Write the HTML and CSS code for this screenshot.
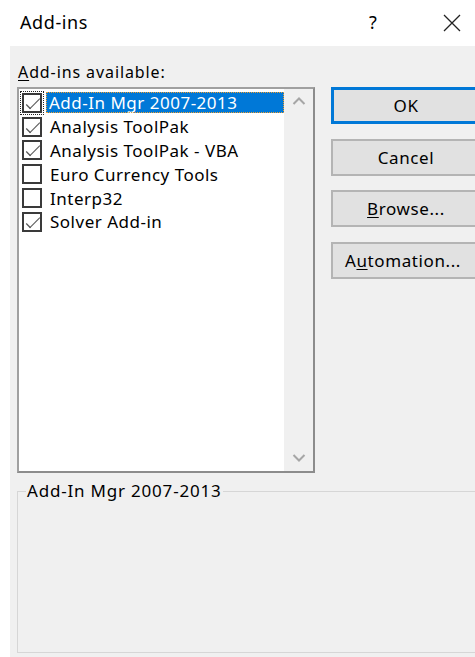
FILE: index.html
```html
<!DOCTYPE html>
<html lang="en">
<head>
<meta charset="utf-8">
<title>Add-ins</title>
<link rel="stylesheet" href="styles.css">
</head>
<body>
<div class="titlebar">
  <span class="title">Add-ins</span>
  <span class="help">?</span>
  <span class="close">
    <svg width="18" height="18" viewBox="0 0 18 18"><path d="M1 1 L17 17 M17 1 L1 17" stroke="#222" stroke-width="1.3" fill="none"/></svg>
  </span>
</div>
<div class="dialog">
  <div class="label"><u>A</u>dd-ins available:</div>
  <div class="main">
    <div class="listbox">
      <ul class="items">
        <li class="item selected"><span class="check on focus"></span><span class="name">Add-In Mgr 2007-2013</span></li>
        <li class="item"><span class="check on"></span><span class="name">Analysis ToolPak</span></li>
        <li class="item"><span class="check on"></span><span class="name">Analysis ToolPak - VBA</span></li>
        <li class="item"><span class="check"></span><span class="name">Euro Currency Tools</span></li>
        <li class="item"><span class="check"></span><span class="name">Interp32</span></li>
        <li class="item"><span class="check on"></span><span class="name">Solver Add-in</span></li>
      </ul>
      <div class="scrollbar">
        <svg width="14" height="10" viewBox="0 0 14 10"><path d="M1.5 8 L7 2.5 L12.5 8" stroke="#a6a6a6" stroke-width="2" fill="none"/></svg>
        <svg width="14" height="10" viewBox="0 0 14 10"><path d="M1.5 2 L7 7.5 L12.5 2" stroke="#a6a6a6" stroke-width="2" fill="none"/></svg>
      </div>
    </div>
    <div class="buttons">
      <button class="btn default">OK</button>
      <button class="btn">Cancel</button>
      <button class="btn"><u>B</u>rowse...</button>
      <button class="btn wide">A<u>u</u>tomation...</button>
    </div>
  </div>
  <div class="group">
    <span class="caption">Add-In Mgr 2007-2013</span>
  </div>
</div>
</body>
</html>
```
FILE: styles.css
```css
html, body {
  margin: 0;
  padding: 0;
  width: 475px;
  height: 657px;
  overflow: hidden;
  background: #ffffff;
  font-family: "Noto Sans", "Open Sans", sans-serif;
  color: #000;
}

.titlebar {
  height: 46px;
  display: flex;
  align-items: center;
  position: relative;
}

.title {
  margin-left: 20px;
  font-size: 18px;
  letter-spacing: 0.6px;
  margin-top: -2px;
}

.help {
  position: absolute;
  left: 369px;
  top: 10px;
  font-size: 18px;
}

.close {
  position: absolute;
  left: 443px;
  top: 14px;
  display: flex;
}

.dialog {
  margin-left: 10px;
  width: 480px;
  height: 611px;
  background: #f0f0f0;
  padding: 16px 0 0 7px;
  box-sizing: border-box;
}

.label {
  font-size: 16px;
  letter-spacing: 0.9px;
  line-height: 20px;
  margin-left: 1px;
}

.label u {
  text-underline-offset: 2px;
}

.main {
  display: flex;
  gap: 16px;
  margin-top: 5px;
}

.listbox {
  width: 298px;
  height: 386px;
  box-sizing: border-box;
  border: 2px solid #a0a0a0;
  border-right-color: #8c8c8c;
  border-bottom-color: #8c8c8c;
  background: #ffffff;
  display: flex;
}

.items {
  list-style: none;
  margin: 0;
  padding: 2px 0 0 0;
  flex: 1;
}

.item {
  height: 23.8px;
  display: flex;
  align-items: center;
  font-size: 17px;
  letter-spacing: 0.5px;
}

.check {
  width: 20px;
  height: 20px;
  margin-left: 3px;
  border: 2px solid #3a3a3a;
  background: #fff;
  box-sizing: border-box;
  position: relative;
  flex: none;
}

.check.on::after {
  content: "";
  position: absolute;
  left: 3px;
  top: 1px;
  width: 11px;
  height: 5px;
  border-left: 1.5px solid #555;
  border-bottom: 1.5px solid #555;
  transform: translate(0, 3px) rotate(-45deg) scaleX(1.2);
  transform-origin: center;
}

.check.focus {
  outline: 1px dotted #222;
  outline-offset: 1px;
}

.name {
  margin-left: 6px;
  padding: 0 2px;
  line-height: 21px;
  white-space: nowrap;
}

.item.selected .name {
  flex: 1;
  background: #0078d7;
  color: #fff;
  outline: 1px dotted #f0a030;
  outline-offset: -1px;
  margin-left: 4px;
  padding-left: 3px;
}

.scrollbar {
  width: 29px;
  background: #f0f0f0;
  display: flex;
  flex-direction: column;
  justify-content: space-between;
  align-items: center;
  padding: 7px 0 8px;
  box-sizing: border-box;
}

.buttons {
  display: flex;
  flex-direction: column;
  gap: 14.5px;
}

.btn {
  width: 150px;
  height: 37px;
  box-sizing: border-box;
  background: #e1e1e1;
  border: 2px solid #b4b4b4;
  font-family: "Noto Sans", "Open Sans", sans-serif;
  font-size: 17px;
  letter-spacing: 0.6px;
  color: #000;
  padding: 0;
  display: flex;
  align-items: center;
  justify-content: center;
  margin: 0;
}

.btn.default {
  border: 3px solid #0078d7;
}

.btn.wide {
  justify-content: flex-start;
  padding-left: 12px;
}

.btn u {
  text-underline-offset: 2px;
}

/* etched group frame; the caption sits on the top edge */
.group {
  margin-top: 18px;
  width: 480px;
  height: 162px;
  box-sizing: border-box;
  border: 1px solid #d6d6d6;
  display: flex;
  align-items: flex-start;
}

.caption {
  font-size: 17px;
  letter-spacing: 0.8px;
  line-height: 18px;
  margin: -10px 0 0 8px;
  padding: 0 1px;
  background: #f0f0f0;
}
```
